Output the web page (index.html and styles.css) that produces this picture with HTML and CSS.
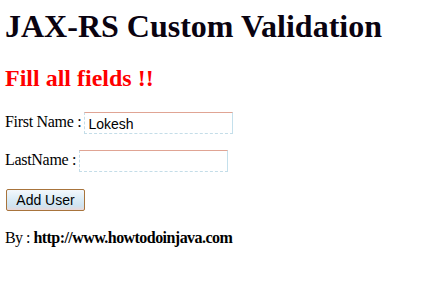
FILE: index.html
```html
<!DOCTYPE html>
<html>
<head>
<meta charset="utf-8">
<title>JAX-RS Custom Validation</title>
<link rel="stylesheet" href="styles.css">
</head>
<body>
<h1 class="title">JAX-RS Custom Validation</h1>
<h2 class="error">Fill all fields !!</h2>
<form class="form">
  <div class="row row-first">
    <label class="label" for="first">First Name :</label>
    <input class="field" id="first" type="text" value="Lokesh">
  </div>
  <div class="row row-last">
    <label class="label" for="last">LastName :</label>
    <input class="field" id="last" type="text" value="">
  </div>
  <div class="row row-btn">
    <button class="btn" type="button">Add User</button>
  </div>
</form>
<p class="byline">By : <b>http://www.howtodoinjava.com</b></p>
</body>
</html>
```

FILE: styles.css
```css
html, body {
  background: #ffffff;
}
body {
  margin: 0;
  padding: 8px 5px 0 5px;
  font-family: "Liberation Serif", "Times New Roman", serif;
  font-size: 16px;
  color: #000000;
}
.title {
  margin: 0;
  font-size: 32px;
  line-height: 36px;
  font-weight: bold;
  color: #0a0310;
}
.error {
  margin: 20px 0 0 0;
  font-size: 24px;
  line-height: 28px;
  font-weight: bold;
  color: #ff0000;
}
.form {
  margin: 0;
}
.row {
  display: flex;
  align-items: center;
  gap: 3px;
}
.row-first {
  margin-top: 20px;
}
.row-last {
  margin-top: 16px;
}
.row-btn {
  margin-top: 17px;
}
.label {
  line-height: 18px;
  padding-bottom: 3px;
  letter-spacing: -0.3px;
}
.field {
  box-sizing: border-box;
  width: 149px;
  height: 22px;
  margin: 0;
  padding: 1px 3px 0 3px;
  font-family: "Liberation Sans", Arial, sans-serif;
  font-size: 14px;
  color: #000000;
  background: #ffffff;
  border-top: 1px solid #e0a494;
  border-right: 1px solid #c4e0ec;
  border-bottom: 1px dashed #c4dde8;
  border-left: 1px dashed #c4dde8;
  outline: none;
}
.btn {
  box-sizing: border-box;
  width: 79px;
  height: 22px;
  margin: 0 0 0 1px;
  padding: 0 0 1px 0;
  font-family: "Liberation Sans", Arial, sans-serif;
  font-size: 14px;
  color: #000000;
  border: 1px solid #a8743c;
  border-radius: 2px;
  background: linear-gradient(#f4f8fc 0%, #dcecf6 45%, #cfe3f0 80%, #ead8d8 100%);
}
.byline {
  margin: 18px 0 0 0;
  line-height: 18px;
  letter-spacing: -0.55px;
}
```
